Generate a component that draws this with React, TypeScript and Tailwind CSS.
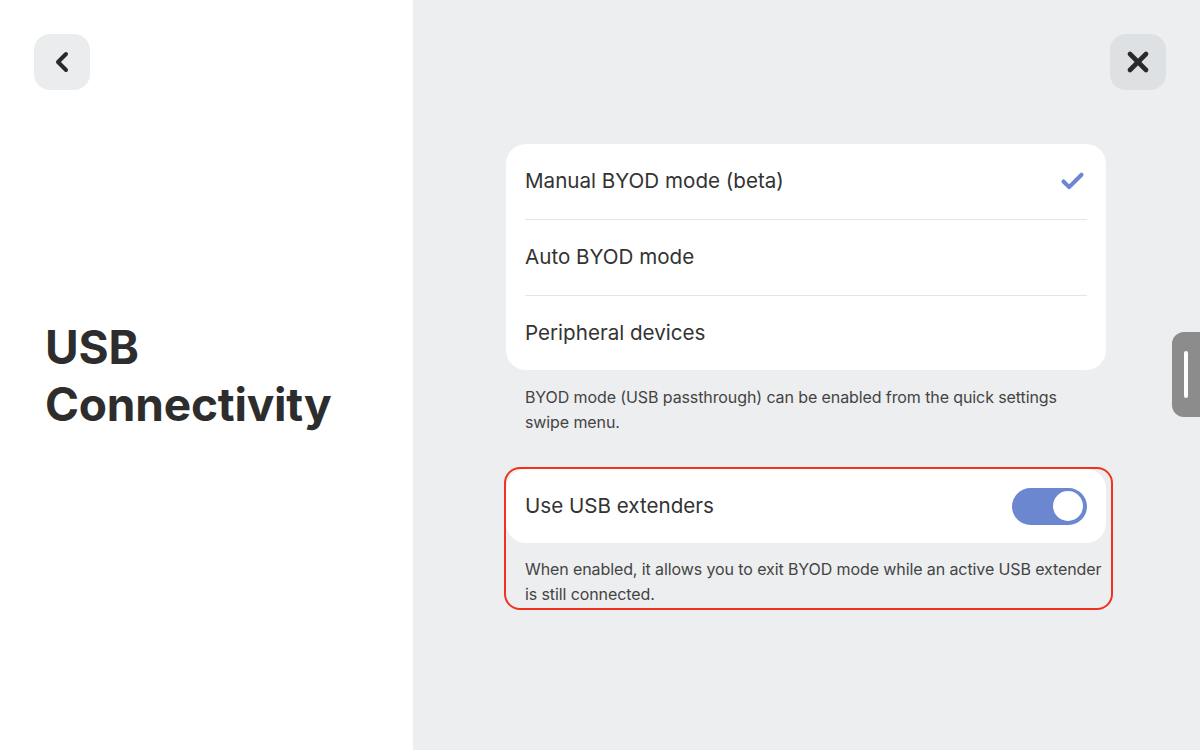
import { ChevronLeft, X, Check } from "lucide-react";

const rows = ["Manual BYOD mode (beta)", "Auto BYOD mode", "Peripheral devices"];

export default function App() {
  return (
    <div className="relative flex h-[750px] w-[1200px] overflow-hidden font-['Inter',sans-serif] text-[#2f2f2f]">
      {/* left pane */}
      <div className="flex w-[413px] flex-col bg-white px-[34px] pt-[34px]">
        <button className="flex h-[56px] w-[56px] items-center justify-center rounded-[16px] bg-[#ebecee] text-[#2a2a2a]">
          <ChevronLeft size={32} strokeWidth={3} />
        </button>
        <h1 className="mt-[229px] pl-[11px] text-[46px] font-bold leading-[57px] tracking-[-0.2px] text-[#2d2d2d]">
          USB
          <br />
          Connectivity
        </h1>
      </div>

      {/* right pane */}
      <div className="relative flex flex-1 flex-col bg-[#eceef0]">
        <div className="flex w-full justify-end pr-[34px] pt-[34px]">
          <button className="flex h-[56px] w-[56px] items-center justify-center rounded-[16px] bg-[#dde1e3] text-[#2a2a2a]">
            <X size={32} strokeWidth={3.5} />
          </button>
        </div>

        <div className="ml-[93px] mt-[54px] w-[600px]">
          <div className="rounded-[20px] bg-white px-[19px]">
            {rows.map((r, i) => (
              <div
                key={r}
                className={`flex items-center justify-between ${i < 2 ? "h-[76px] border-b border-[#e4e7e9]" : "h-[74px]"}`}
              >
                <span className="text-[20.6px] text-[#333]">{r}</span>
                {i === 0 && <Check size={27} strokeWidth={3.6} className="mr-[1px] text-[#6b87d0]" />}
              </div>
            ))}
          </div>
          <p className="mt-[15px] pl-[19px] pr-[4px] text-[16px] leading-[25px] tracking-[-0.1px] text-[#444]">
            BYOD mode (USB passthrough) can be enabled from the quick settings swipe menu.
          </p>

          <div className="relative mt-[34px]">
            <div className="pointer-events-none absolute -bottom-[1px] -left-[2px] -right-[7px] -top-[2px] rounded-[16px] border-2 border-[#f0321f]" />
            <div className="flex h-[74px] items-center justify-between rounded-[20px] bg-white px-[19px]">
              <span className="text-[20.6px] text-[#333]">Use USB extenders</span>
              <div className="flex h-[37px] w-[75px] items-center justify-end rounded-full bg-[#6b87d0] pr-[4px]">
                <div className="h-[30px] w-[30px] rounded-full bg-white" />
              </div>
            </div>
            <p className="pb-[2px] pl-[19px] pr-0 pt-[14px] text-[16px] leading-[25px] tracking-[-0.1px] text-[#444]">
              When enabled, it allows you to exit BYOD mode while an active USB extender is still connected.
            </p>
          </div>
        </div>

        {/* side handle */}
        <div className="absolute right-0 top-[332px] flex h-[85px] w-[28px] items-center rounded-l-[12px] bg-[#8c8c8c] pl-[12px]">
          <div className="h-[47px] w-[4px] rounded-full bg-white" />
        </div>
      </div>
    </div>
  );
}
